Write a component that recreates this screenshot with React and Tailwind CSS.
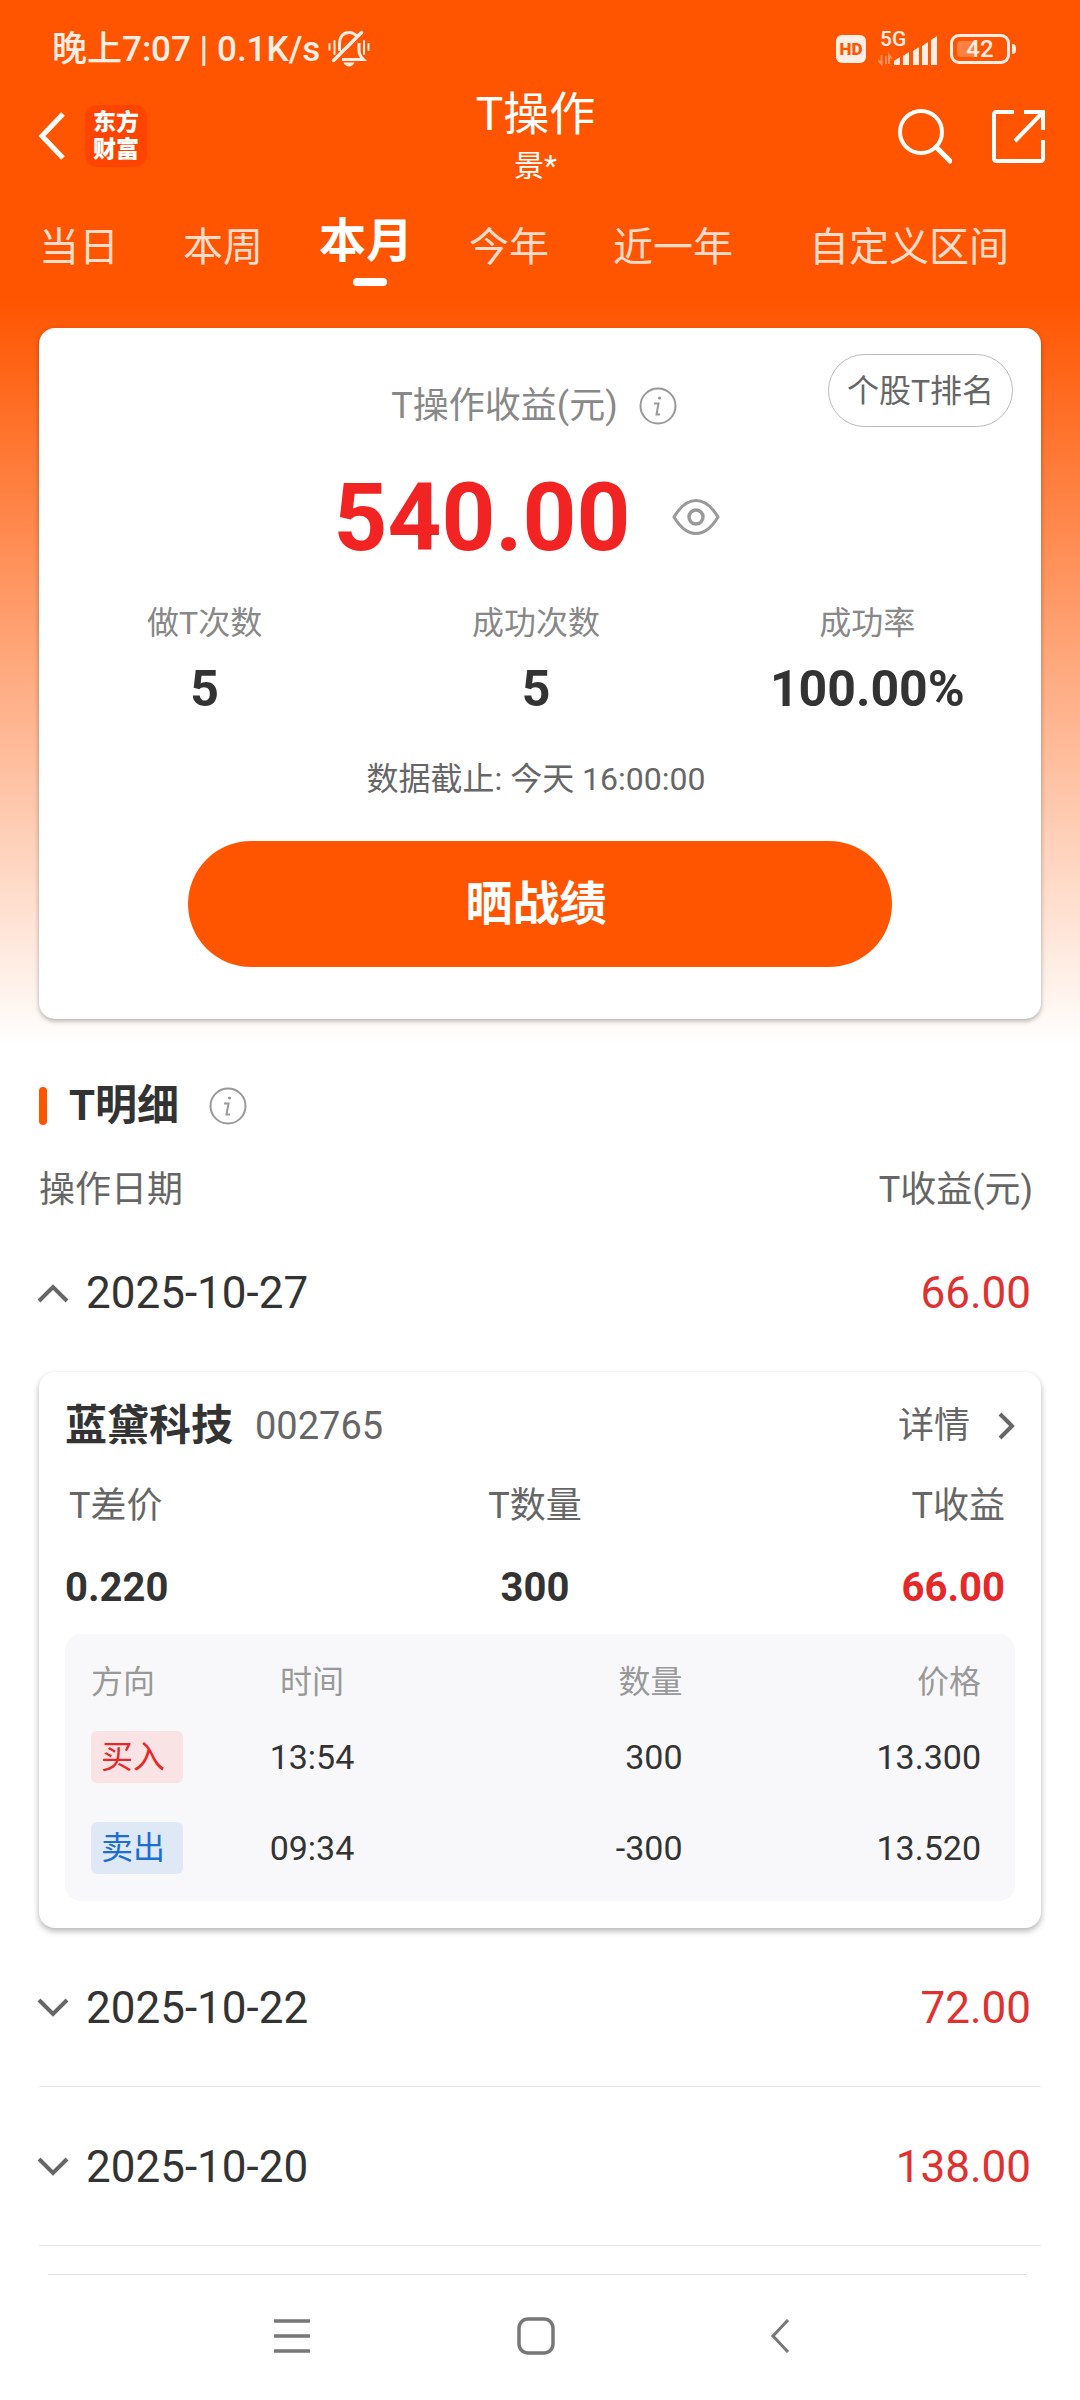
import { useState } from "react";

const tabs = ["当日", "本周", "本月", "今年", "近一年", "自定义区间"];

const stats = [
  { label: "做T次数", value: "5" },
  { label: "成功次数", value: "5" },
  { label: "成功率", value: "100.00%" },
];

const records = [
  {
    date: "2025-10-27",
    profit: "66.00",
    stock: {
      name: "蓝黛科技",
      code: "002765",
      spread: "0.220",
      amount: "300",
      profit: "66.00",
      trades: [
        { side: "buy", label: "买入", time: "13:54", amount: "300", price: "13.300" },
        { side: "sell", label: "卖出", time: "09:34", amount: "-300", price: "13.520" },
      ],
    },
  },
  { date: "2025-10-22", profit: "72.00" },
  { date: "2025-10-20", profit: "138.00" },
];

function MutedBell() {
  return (
    <svg width="42" height="38" viewBox="0 0 42 38" fill="none" stroke="currentColor" strokeWidth="3">
      <path d="M11.500 21V14C11.500 6 16 2.500 21 2.500C25 2.500 27 4 29 6.500" />
      <path d="M31 13V21C31 24 33 27 35.500 29.500H14" />
      <path d="M5.500 30.500L33.500 2.500" strokeWidth="3.500" strokeLinecap="round" />
      <path d="M15.500 32.500H26.500C25.500 35 23 36.500 21 36.500C19 36.500 16.500 35 15.500 32.500Z" fill="currentColor" stroke="none" />
      <path d="M1.500 14V20M6.500 11V24M36 11V24M40.500 14V20" strokeWidth="2" strokeLinecap="round" />
    </svg>
  );
}

function SignalBars() {
  return (
    <svg width="60" height="34" viewBox="0 0 60 34" fill="currentColor">
      <path d="M16 29L22 25V33H16ZM25 24L31 20V33H25ZM35 19L41 15V33H35ZM44 14L50 10V33H44ZM53 8L59 4V33H53Z" />
      <path d="M3.500 23V32L0 28M8 24V32M11 32V23L14 27" fill="none" stroke="currentColor" strokeWidth="2" opacity="0.4" />
    </svg>
  );
}

function StatusBar() {
  return (
    <div className="flex h-[42px] items-center justify-between pr-16 pl-[52px] text-[#ffeee6]">
      <div className="flex items-center gap-2">
        <span className="pt-0.5 text-[35px] leading-[42px] font-medium whitespace-nowrap">晚上7:07 | 0.1K/s</span>
        <MutedBell />
      </div>
      <div className="flex items-center">
        <span className="flex h-[28px] w-[30px] items-center justify-center rounded-md bg-[#ffeee6] text-[17px] leading-[28px] font-black text-[#ff5500]">
          HD
        </span>
        <div className="relative ml-3">
          <SignalBars />
          <span className="absolute -top-1 left-0.5 text-[21px] leading-[22px] font-medium">5G</span>
        </div>
        <div className="relative ml-3 flex h-[30px] w-[60px] items-center justify-center rounded-[9px] border-[3px] border-[#ffeee6]">
          <span className="absolute inset-y-1 left-1 w-[20px] rounded-sm bg-[#ff8040]" />
          <span className="relative text-[24px] leading-[24px] font-medium">42</span>
        </div>
        <span className="ml-0.5 h-[10px] w-[4px] rounded-r-sm bg-[#ffeee6]" />
      </div>
    </div>
  );
}

function Header() {
  return (
    <header className="mt-5 grid grid-cols-[1fr_auto_1fr] items-center pr-[35px] pl-[38px] text-white">
      <div className="flex items-center gap-[19px]">
        <button aria-label="返回">
          <svg width="28" height="48" viewBox="0 0 28 48" fill="none" stroke="currentColor" strokeWidth="5">
            <path d="M25 2L4 24L25 46" />
          </svg>
        </button>
        <div className="flex h-[62px] w-[62px] items-center justify-center rounded-xl bg-[#ff4400]">
          <span className="text-center text-[23px] leading-[27px] font-black">
            东方
            <br />
            财富
          </span>
        </div>
      </div>
      <div className="mr-3 text-center">
        <h1 className="text-[46px] leading-[48px]">T操作</h1>
        <p className="mt-3 text-[30px] leading-[32px]">景*</p>
      </div>
      <div className="flex items-center justify-end gap-10">
        <button aria-label="搜索">
          <svg width="55" height="55" viewBox="0 0 55 55" fill="none" stroke="currentColor" strokeWidth="4">
            <circle cx="24" cy="23" r="21" />
            <path d="M39 38L53 52" strokeWidth="5" strokeLinecap="round" />
          </svg>
        </button>
        <button aria-label="分享">
          <svg width="53" height="53" viewBox="0 0 53 53" fill="none" stroke="currentColor" strokeWidth="4">
            <path d="M22 2H4C3 2 2 3 2 4V49C2 50 3 51 4 51H49C50 51 51 50 51 49V30" />
            <path d="M32 2H51V20M51 2L23 31" />
          </svg>
        </button>
      </div>
    </header>
  );
}

function Tabs({ active, onChange }) {
  return (
    <nav className="mt-8 flex h-[72px] items-start gap-16 pl-[39px]">
      {tabs.map((tab) =>
        tab === active ? (
          <button
            key={tab}
            className="-mx-2 flex flex-col items-center text-[47px] leading-[54px] font-bold whitespace-nowrap text-white"
          >
            {tab}
            <span className="mt-2.5 ml-2 h-2 w-[34px] rounded-full bg-white" />
          </button>
        ) : (
          <button
            key={tab}
            onClick={() => onChange(tab)}
            className="pt-2 text-[40px] leading-[52px] whitespace-nowrap text-[#ffdccb] last:ml-3"
          >
            {tab}
          </button>
        )
      )}
    </nav>
  );
}

function InfoIcon() {
  return (
    <svg width="38" height="38" viewBox="0 0 38 38" fill="none" stroke="#999999" strokeWidth="2">
      <circle cx="19" cy="19" r="17.500" />
      <circle cx="20.500" cy="11" r="1.600" fill="#999999" stroke="none" />
      <path d="M15 16.500H19.500L17.500 27.500H21" strokeWidth="2" />
    </svg>
  );
}

function EyeIcon() {
  return (
    <svg width="48" height="38" viewBox="0 0 48 38" fill="none" stroke="#999999" strokeWidth="3">
      <path d="M2 19C8 9 15 2.500 24 2.500C33 2.500 40 9 46 19C40 29 33 35.500 24 35.500C15 35.500 8 29 2 19Z" strokeLinejoin="round" />
      <circle cx="24" cy="19" r="7" strokeWidth="3.500" />
    </svg>
  );
}

function SummaryCard() {
  return (
    <section className="mx-[39px] mt-[42px] rounded-2xl bg-white pt-[26px] pb-[52px] shadow-[0_2px_5px_rgba(0,0,0,0.3)]">
      <div className="grid grid-cols-[1fr_auto_1fr] items-start px-7">
        <div />
        <div className="mt-8 mr-3 flex items-center gap-[21px]">
          <h2 className="text-[36px] leading-[40px] text-[#888888]">T操作收益(元)</h2>
          <button aria-label="收益说明">
            <InfoIcon />
          </button>
        </div>
        <button className="h-[73px] justify-self-end rounded-full border border-[#bbbbbb] px-[18px] text-[32px] leading-[40px] text-[#666666]">
          个股T排名
        </button>
      </div>
      <div className="mt-10 flex items-center justify-center gap-[42px] pr-[26px]">
        <span className="pt-0.5 text-[94px] leading-[98px] font-bold text-[#f22323]">540.00</span>
        <button aria-label="隐藏金额">
          <EyeIcon />
        </button>
      </div>
      <dl className="mt-9 grid grid-cols-3 pr-2 text-center">
        {stats.map((item) => (
          <div key={item.label}>
            <dt className="text-[32px] leading-[40px] text-[#888888]">{item.label}</dt>
            <dd className="mt-[18px] text-[50px] leading-[56px] font-bold text-[#333333]">{item.value}</dd>
          </div>
        ))}
      </dl>
      <p className="mt-[42px] pr-2 text-center text-[32px] leading-[40px] text-[#666666]">
        数据截止: 今天 16:00:00
      </p>
      <div className="mt-[42px] px-[149px]">
        <button className="h-[126px] w-full rounded-full bg-[#ff5500] pr-2 text-[47px] leading-[56px] font-bold text-white">
          晒战绩
        </button>
      </div>
    </section>
  );
}

function Chevron({ open }) {
  return (
    <svg width="32" height="20" viewBox="0 0 32 20" fill="none" stroke="#666666" strokeWidth="4">
      <path d={open ? "M2 18L16 4L30 18" : "M2 2L16 16L30 2"} />
    </svg>
  );
}

function StockCard({ stock }) {
  return (
    <article className="mx-[39px] rounded-2xl bg-white px-[26px] pt-[26px] pb-[27px] shadow-[0_3px_6px_rgba(0,0,0,0.3)]">
      <div className="flex items-center justify-between">
        <div className="flex items-center gap-[22px] leading-[56px]">
          <h3 className="text-[42px] font-bold text-[#333333]">{stock.name}</h3>
          <span className="text-[38px] text-[#666666]">{stock.code}</span>
        </div>
        <a href="#detail" className="flex items-center gap-[27px] text-[36px] leading-[56px] text-[#666666]">
          详情
          <svg width="18" height="28" viewBox="0 0 18 28" fill="none" stroke="currentColor" strokeWidth="4">
            <path d="M3 2L15 14L3 26" />
          </svg>
        </a>
      </div>
      <dl className="mt-8 grid grid-cols-3 pr-2.5 text-center">
        <div className="text-left">
          <dt className="pl-1 text-[36px] leading-[40px] text-[#666666]">T差价</dt>
          <dd className="mt-[42px] text-[40px] leading-[40px] font-bold text-[#333333]">{stock.spread}</dd>
        </div>
        <div>
          <dt className="text-[36px] leading-[40px] text-[#666666]">T数量</dt>
          <dd className="mt-[42px] text-[40px] leading-[40px] font-bold text-[#333333]">{stock.amount}</dd>
        </div>
        <div className="text-right">
          <dt className="text-[36px] leading-[40px] text-[#666666]">T收益</dt>
          <dd className="mt-[42px] text-[40px] leading-[40px] font-bold text-[#e62828]">{stock.profit}</dd>
        </div>
      </dl>
      <div className="mt-[26px] rounded-2xl bg-[#f8f8fa] pb-2">
        <table className="w-full table-fixed leading-[40px]">
          <thead className="text-[32px] text-[#999999]">
            <tr className="h-[77px]">
              <th className="w-[20%] pt-[18px] pl-[26px] text-left font-normal">方向</th>
              <th className="w-[12%] pt-[18px] text-center font-normal">时间</th>
              <th className="w-[33%] pt-[18px] text-right font-normal">数量</th>
              <th className="w-[35%] pt-[18px] pr-[34px] text-right font-normal">价格</th>
            </tr>
          </thead>
          <tbody className="text-[34px] text-[#333333]">
            {stock.trades.map((trade) => (
              <tr key={trade.side} className="h-[91px]">
                <td className="pl-[26px]">
                  <span
                    className={`block h-[52px] w-[92px] rounded-md pl-2.5 text-[32px] leading-[52px] ${
                      trade.side === "buy"
                        ? "bg-[#f9e3e4] text-[#e62828]"
                        : "bg-[#dfe9f5] text-[#1a6fd0]"
                    }`}
                  >
                    {trade.label}
                  </span>
                </td>
                <td className="text-center">{trade.time}</td>
                <td className="text-right">{trade.amount}</td>
                <td className="pr-[34px] text-right">{trade.price}</td>
              </tr>
            ))}
          </tbody>
        </table>
      </div>
    </article>
  );
}

function RecordRow({ record, open, onToggle }) {
  return (
    <>
      <button
        onClick={onToggle}
        aria-expanded={open}
        className={`mx-[39px] flex h-[159px] items-center justify-between border-b pt-0.5 pr-2.5 text-[44px] leading-[52px] ${
          open ? "border-transparent" : "border-[#e8e8e8]"
        }`}
      >
        <span className="-ml-0.5 flex items-center gap-[17px] text-[#333333]">
          <Chevron open={open} />
          {record.date}
        </span>
        <span className="text-[#e03131]">{record.profit}</span>
      </button>
      {open && record.stock && <StockCard stock={record.stock} />}
    </>
  );
}

function NavBar() {
  return (
    <footer className="mt-7">
      <div className="mr-[54px] ml-12 h-px bg-[#dddddd]" />
      <div className="flex h-[122px] items-center justify-center gap-[184px] pr-2 text-[#777777]">
        <button aria-label="最近任务" className="flex w-[60px] justify-center">
          <svg width="36" height="36" viewBox="0 0 36 36" stroke="currentColor" strokeWidth="3.500">
            <path d="M0 3H36M0 18H36M0 33H36" />
          </svg>
        </button>
        <button aria-label="主屏幕" className="flex w-[60px] justify-center">
          <svg width="38" height="38" viewBox="0 0 38 38" fill="none" stroke="currentColor" strokeWidth="3.500">
            <rect x="2" y="2" width="34" height="34" rx="9" />
          </svg>
        </button>
        <button aria-label="返回上一页" className="flex w-[60px] justify-center">
          <svg width="20" height="36" viewBox="0 0 20 36" fill="none" stroke="currentColor" strokeWidth="3">
            <path d="M18 2L3 18L18 34" />
          </svg>
        </button>
      </div>
    </footer>
  );
}

export default function App() {
  const [activeTab, setActiveTab] = useState("本月");
  const [openDate, setOpenDate] = useState("2025-10-27");

  return (
    <div className="flex min-h-screen flex-col bg-white bg-[linear-gradient(#ff5500_300px,#ffffff_1045px)] pt-7 font-[Roboto,'Noto_Sans_CJK_SC',sans-serif]">
      <StatusBar />
      <Header />
      <Tabs active={activeTab} onChange={setActiveTab} />
      <SummaryCard />
      <section className="mt-[63px] flex flex-col">
        <div className="flex items-center px-[39px]">
          <span className="h-[38px] w-2 rounded-sm bg-[#ff5500]" />
          <h2 className="ml-[22px] text-[42px] leading-[48px] font-bold text-[#333333]">T明细</h2>
          <button aria-label="明细说明" className="ml-[30px]">
            <InfoIcon />
          </button>
        </div>
        <div className="mt-10 mb-[3px] flex justify-between px-[39px] text-[36px] leading-[40px] text-[#666666]">
          <span>操作日期</span>
          <span className="pr-2">T收益(元)</span>
        </div>
        {records.map((record) => (
          <RecordRow
            key={record.date}
            record={record}
            open={record.date === openDate}
            onToggle={() => setOpenDate(record.date === openDate ? "" : record.date)}
          />
        ))}
      </section>
      <NavBar />
    </div>
  );
}
